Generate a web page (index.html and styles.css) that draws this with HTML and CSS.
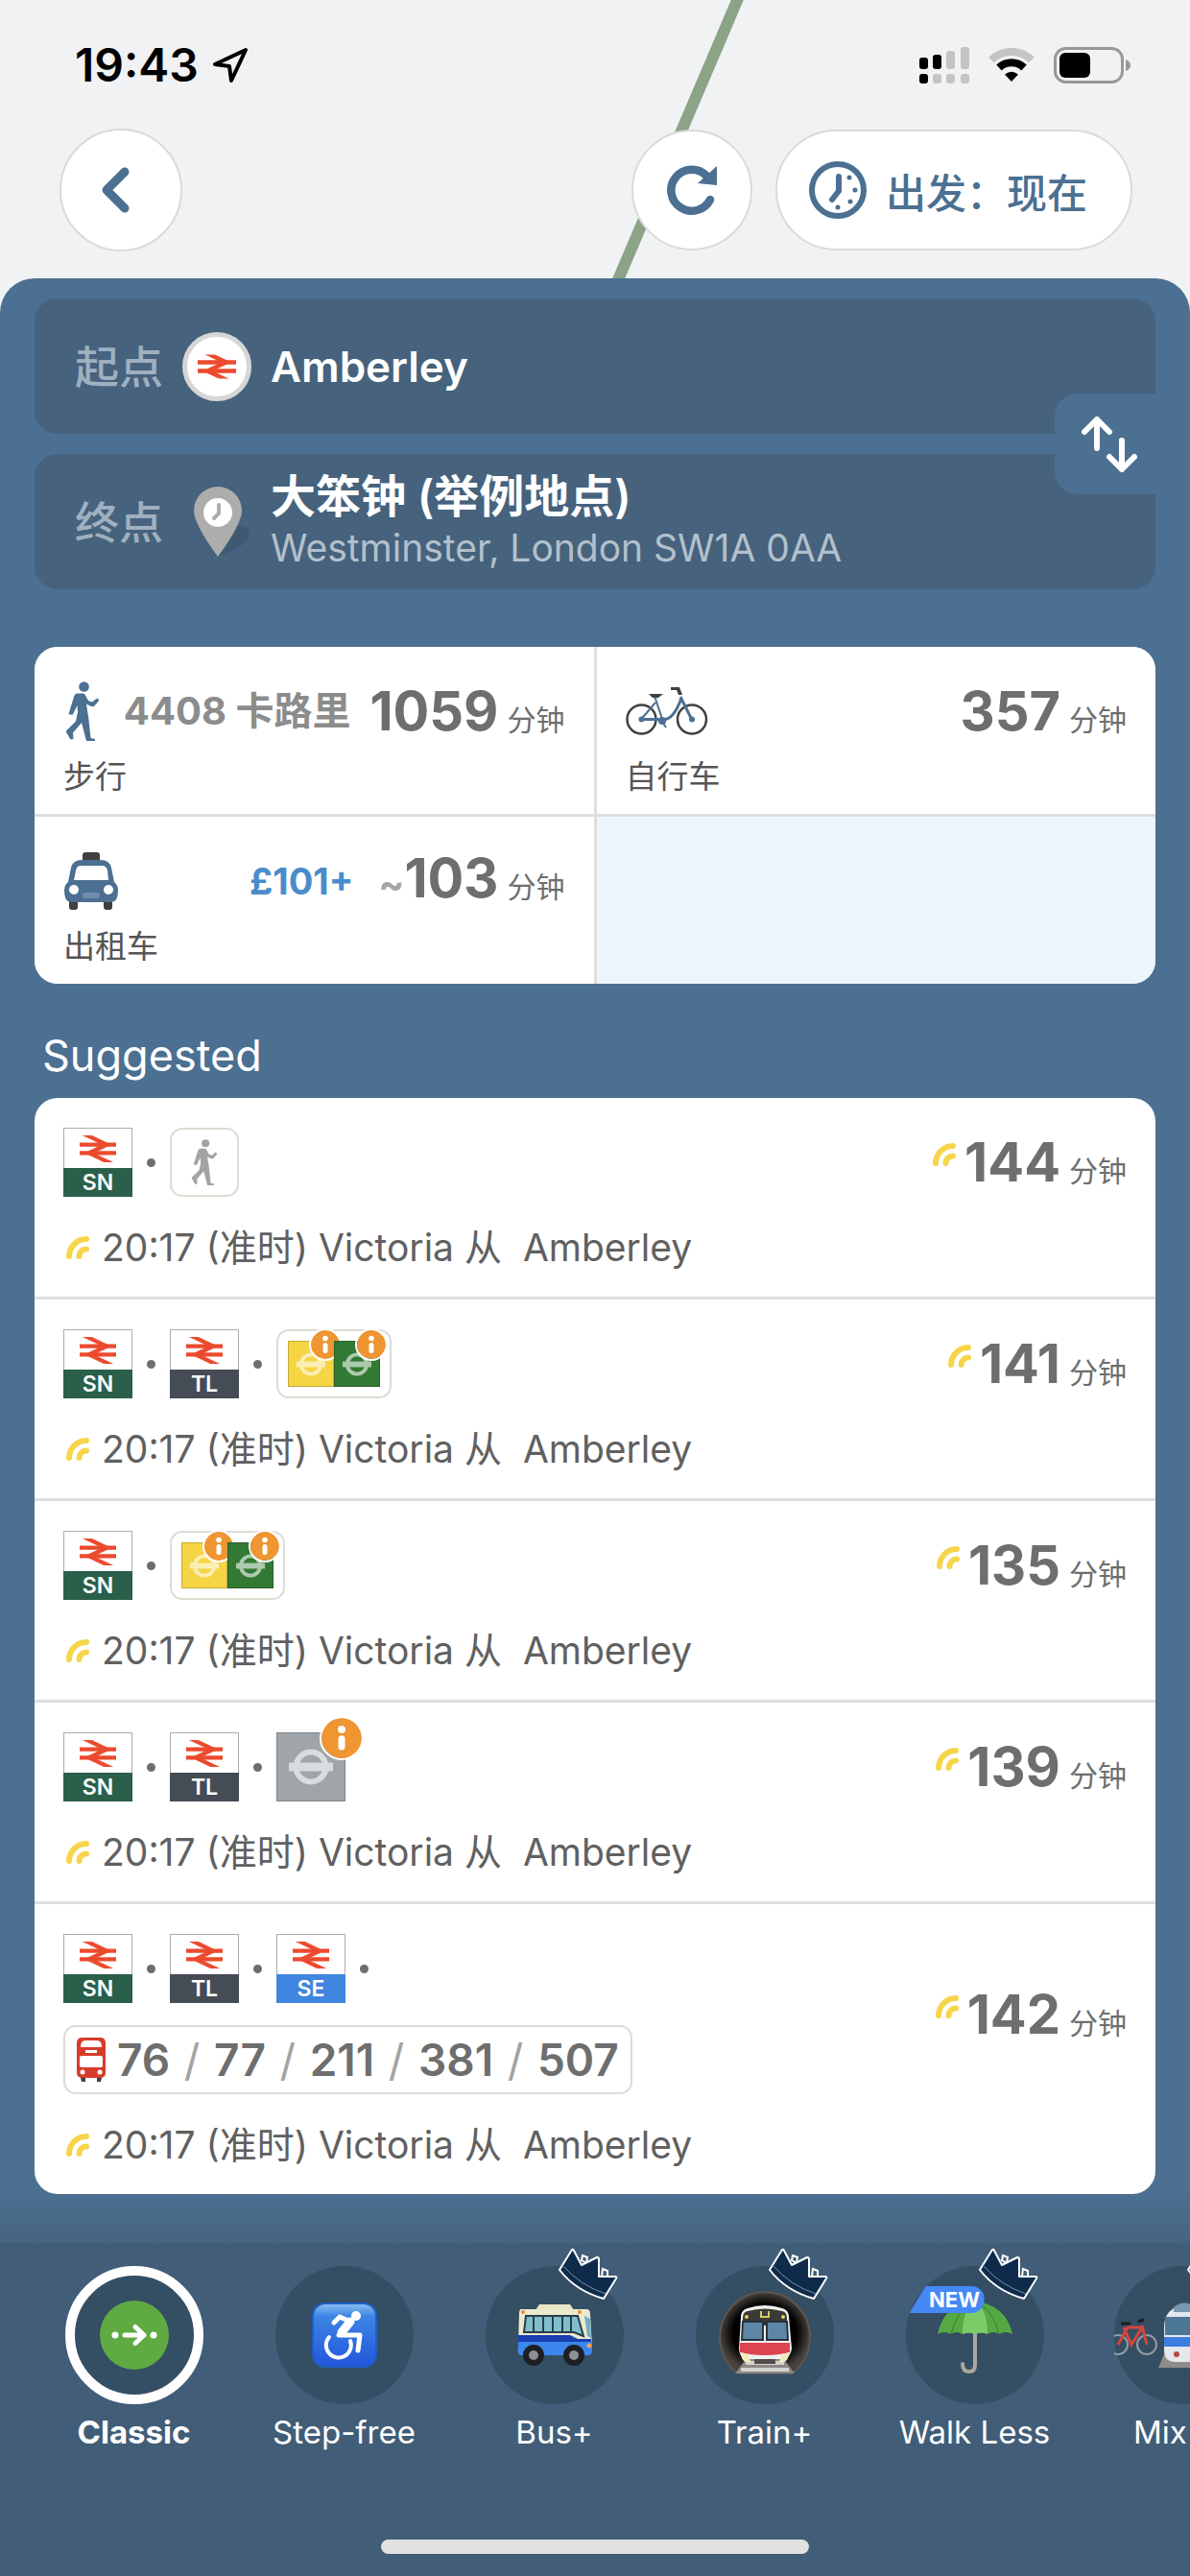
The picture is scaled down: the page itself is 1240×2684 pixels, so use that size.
FILE: index.html
```html
<!DOCTYPE html>
<html lang="zh-CN">
<head>
  <meta charset="UTF-8">
  <meta name="viewport" content="width=device-width, initial-scale=1.0">
  <title>Amberley - 大笨钟</title>
  <link rel="stylesheet" href="styles.css">
</head>
<body>

  <!-- Shared icons -->
  <svg class="sprite" aria-hidden="true">
    <symbol id="rail" viewBox="0 0 62 39">
      <g fill="none" stroke="#ec4a2e">
        <path d="M1-8.9 46 12.4 16 26.6 61 47.9" stroke-width="7"/>
        <path d="M0 12.4H62M62 26.6H0" stroke-width="7"/>
      </g>
    </symbol>
    <symbol id="walk" viewBox="0 0 35 62">
      <circle cx="19" cy="5.5" r="5.3"/>
      <path d="M12 12.500h6q2 0 3 3l2.500 4.500 4 1.500 5-4 2.500 2-5.500 6.500h-3l-5-2.500 2.500 16.500 2 19 4.500 1V62H21.500l-5-19-9 10.500.5 6.500-3 .5L0 52l10.500-10.500L12.500 32l-.5-7-5 10-4-1 5.500-18q1-3.500 3.500-3.500z"/>
    </symbol>
    <symbol id="live" viewBox="0 0 24 24">
      <g fill="none" stroke="#f7d54a" stroke-width="6" stroke-linecap="round">
        <path d="M3 21A18 18 0 0 1 21 3"/>
        <path d="M13.500 21A7.500 7.500 0 0 1 21 13.500"/>
      </g>
    </symbol>
    <symbol id="roundel" viewBox="0 0 46 38">
      <circle cx="23" cy="19" r="15.500" fill="none" stroke="#fff" stroke-width="6"/>
      <path d="M0 14.500h46v9H0z" fill="#fff"/>
    </symbol>
    <symbol id="info" viewBox="0 0 30 30">
      <circle cx="15" cy="15" r="15" fill="#ef9532"/>
      <circle cx="15" cy="8.500" r="2.800" fill="#fff"/>
      <rect x="12.500" y="13" width="5" height="11" rx="2.500" fill="#fff"/>
    </symbol>
    <symbol id="crown" viewBox="-2 -2 66 58">
      <path d="M25 7l5 2-1 6-5-3zM46 21l5 2v6h-6z" fill="#415d77" stroke="#fff" stroke-width="2"/>
      <path d="M1 22 14 1q1-1 2 1l8 15 16-8q2 0 2 2v18h17q2 0 1 2L47 52Q18 44 1 22z" fill="#0f2b4b" stroke="#fff" stroke-width="2" stroke-linejoin="round"/>
      <path d="M4 17Q22 38 49 47" fill="none" stroke="#7d90a5" stroke-width="1"/>
    </symbol>
  </svg>

  <!-- Map strip with status bar and controls -->
  <header class="header">
    <svg class="map" viewBox="0 0 1240 290" preserveAspectRatio="none" aria-hidden="true">
      <path d="M770-4 643 294" stroke="#8ba387" stroke-width="12"/>
    </svg>
    <div class="status">
      <span class="time">19:43</span>
      <svg class="location" viewBox="0 0 38 38"><path d="M35 3 3 18l15 2 2 15z" fill="none" stroke="#000" stroke-width="4" stroke-linejoin="round"/></svg>
      <svg class="cell" viewBox="0 0 52 38">
        <g fill="#000"><rect x="0" y="11" width="9" height="12" rx="3"/><rect x="14" y="8" width="9" height="15" rx="3"/><rect x="0" y="28" width="9" height="10" rx="3"/></g>
        <g fill="#c2c4c6"><rect x="28" y="4" width="9" height="19" rx="3"/><rect x="43" y="0" width="9" height="23" rx="3"/><rect x="14" y="28" width="9" height="10" rx="3"/><rect x="28" y="28" width="9" height="10" rx="3"/><rect x="43" y="28" width="9" height="10" rx="3"/></g>
      </svg>
      <svg class="wifi" viewBox="0 0 48 36">
        <g fill="none" stroke-width="8">
          <path d="M3 12.500a30 30 0 0 1 42 0" stroke="#c2c4c6"/>
          <path d="M11 20.500a19 19 0 0 1 26 0" stroke="#000"/>
        </g>
        <path d="M24 35l-7-7.500q7-5.500 14 0z"/>
      </svg>
      <svg class="battery" viewBox="0 0 80 38">
        <rect x="1.500" y="1.500" width="70" height="35" rx="11" fill="none" stroke="#96989a" stroke-width="3"/>
        <rect x="6" y="6" width="32" height="26" rx="6"/>
        <path d="M75 13q5 2 5 6t-5 6z" fill="#96989a"/>
      </svg>
    </div>
    <div class="controls">
      <button class="round-btn" aria-label="返回">
        <svg width="32" height="48" viewBox="0 0 32 48"><path d="M26 5 7 24l19 19" fill="none" stroke="#4b7091" stroke-width="9" stroke-linecap="round" stroke-linejoin="round"/></svg>
      </button>
      <button class="round-btn refresh" aria-label="刷新">
        <svg width="54" height="54" viewBox="0 0 54 54"><path d="M46 37A21.500 21.500 0 1 1 42 12" fill="none" stroke="#4b7091" stroke-width="8.500" stroke-linecap="round"/><path d="M53 2v20L33 20z" fill="#4b7091"/></svg>
      </button>
      <button class="depart">
        <svg width="60" height="60" viewBox="0 0 60 60">
          <g fill="none" stroke="#4b7091"><circle cx="30" cy="30" r="27" stroke-width="6"/><path d="M31 16v15l-7 9" stroke-width="6" stroke-linecap="round" stroke-linejoin="round"/></g>
          <g fill="#4b7091"><circle cx="42" cy="17" r="2.500"/><circle cx="48" cy="30" r="2.500"/><circle cx="43" cy="42" r="2.500"/><circle cx="30" cy="48" r="2.500"/></g>
        </svg>
        出发：现在
      </button>
    </div>
  </header>

  <main class="sheet">

    <!-- Start and end -->
    <section class="search">
      <button class="place">
        <span class="place-label">起点</span>
        <span class="station"><svg width="40" height="30" viewBox="0 0 62 39"><use href="#rail"/></svg></span>
        <span class="place-name">Amberley</span>
      </button>
      <button class="place">
        <span class="place-label">终点</span>
        <svg class="pin" viewBox="0 0 72 76">
          <path d="M37 73Q40 46 56 42q12-2 14 8-2 14-33 23z" fill="#3e5972"/>
          <path d="M37 74Q12 40 12 26a25 25 0 0 1 50 0Q62 40 37 74z" fill="#adadad"/>
          <circle cx="37" cy="28" r="15" fill="#fff"/>
          <path d="M38 20v9l-5 5" fill="none" stroke="#adadad" stroke-width="4" stroke-linecap="round"/>
        </svg>
        <span class="place-text">
          <span class="place-name zh">大笨钟 (举例地点)</span>
          <span class="address">Westminster, London SW1A 0AA</span>
        </span>
      </button>
      <button class="swap" aria-label="交换">
        <svg width="60" height="60" viewBox="0 0 60 60"><path d="M17 34V4M4 17 17 4l13 13M43 26v30M30 43l13 13 13-13" fill="none" stroke="#fff" stroke-width="6" stroke-linecap="round" stroke-linejoin="round"/></svg>
      </button>
    </section>

    <!-- Walk / bike / taxi -->
    <section class="options">
      <div class="option">
        <div class="option-head">
          <svg class="walk-blue" viewBox="0 0 35 62"><use href="#walk"/></svg>
          <span class="calories">4408 卡路里</span>
          <span class="duration"><b>1059</b>分钟</span>
        </div>
        <p>步行</p>
      </div>
      <div class="option">
        <div class="option-head">
          <svg width="86" height="50" viewBox="0 0 86 50">
            <g fill="none" stroke="#404040" stroke-width="2.500"><circle cx="16.500" cy="33.500" r="15"/><circle cx="69" cy="33.500" r="15"/></g>
            <g fill="none" stroke="#4b7091"><path d="M16 33.500 31 16M30 9l9 27" stroke-width="2"/><path d="M16 33.500h24q10 0 18-22" stroke-width="3"/><path d="M57 10l12 24" stroke-width="3"/><path d="M38 36l4 6" stroke-width="2"/></g>
            <g fill="#4b7091"><circle cx="16.500" cy="33.500" r="3"/><circle cx="69" cy="33.500" r="3"/><circle cx="38" cy="35" r="4"/></g>
            <path d="M24 7h15l-5 4h-6zM47 0h9l3 8h-4l-2-5h-6z" fill="#404040"/>
          </svg>
          <span class="duration"><b>357</b>分钟</span>
        </div>
        <p>自行车</p>
      </div>
      <div class="option">
        <div class="option-head">
          <svg width="58" height="60" viewBox="0 0 56 60">
            <g fill="#404040"><rect x="19" y="0" width="18" height="12" rx="3"/><rect x="5" y="46" width="9" height="14" rx="3"/><rect x="41" y="46" width="9" height="14" rx="3"/></g>
            <path d="M18 8h20q9 0 11 8l3 15q4 3 4 9 0 12-7 12H7q-7 0-7-12 0-6 4-9l3-15q2-8 11-8z" fill="#4b7091"/>
            <path d="M17 14h22q5 0 6 5l1 10H10l2-10q1-5 5-5z" fill="#fff"/>
            <circle cx="10" cy="39" r="5" fill="#fff"/><circle cx="46" cy="39" r="5" fill="#fff"/>
            <rect x="19" y="42" width="18" height="6" rx="3" fill="#6f8dab"/>
          </svg>
          <span class="price">£101+</span>
          <span class="duration"><b><i>~</i>103</b>分钟</span>
        </div>
        <p>出租车</p>
      </div>
      <div class="option empty"></div>
    </section>

    <h2>Suggested</h2>

    <!-- Routes -->
    <ul class="routes">
      <li class="route">
        <div class="route-head">
          <div class="legs">
            <span class="leg sn"><svg><use href="#rail"/></svg><b>SN</b></span>
            <span class="dot"></span>
            <span class="leg-box"><svg class="walk-grey" viewBox="0 0 35 62"><use href="#walk"/></svg></span>
          </div>
          <span class="duration"><svg><use href="#live"/></svg><b>144</b>分钟</span>
        </div>
        <p><svg><use href="#live"/></svg><span>20:17 (准时) Victoria 从  Amberley</span></p>
      </li>
      <li class="route">
        <div class="route-head">
          <div class="legs">
            <span class="leg sn"><svg><use href="#rail"/></svg><b>SN</b></span>
            <span class="dot"></span>
            <span class="leg tl"><svg><use href="#rail"/></svg><b>TL</b></span>
            <span class="dot"></span>
            <span class="leg-box">
              <span class="line circle-line"><svg><use href="#roundel"/></svg><svg class="info"><use href="#info"/></svg></span>
              <span class="line district-line"><svg><use href="#roundel"/></svg><svg class="info"><use href="#info"/></svg></span>
            </span>
          </div>
          <span class="duration"><svg><use href="#live"/></svg><b>141</b>分钟</span>
        </div>
        <p><svg><use href="#live"/></svg><span>20:17 (准时) Victoria 从  Amberley</span></p>
      </li>
      <li class="route">
        <div class="route-head">
          <div class="legs">
            <span class="leg sn"><svg><use href="#rail"/></svg><b>SN</b></span>
            <span class="dot"></span>
            <span class="leg-box">
              <span class="line circle-line"><svg><use href="#roundel"/></svg><svg class="info"><use href="#info"/></svg></span>
              <span class="line district-line"><svg><use href="#roundel"/></svg><svg class="info"><use href="#info"/></svg></span>
            </span>
          </div>
          <span class="duration"><svg><use href="#live"/></svg><b>135</b>分钟</span>
        </div>
        <p><svg><use href="#live"/></svg><span>20:17 (准时) Victoria 从  Amberley</span></p>
      </li>
      <li class="route">
        <div class="route-head">
          <div class="legs">
            <span class="leg sn"><svg><use href="#rail"/></svg><b>SN</b></span>
            <span class="dot"></span>
            <span class="leg tl"><svg><use href="#rail"/></svg><b>TL</b></span>
            <span class="dot"></span>
            <span class="line jubilee-line"><svg><use href="#roundel"/></svg><svg class="info"><use href="#info"/></svg></span>
          </div>
          <span class="duration"><svg><use href="#live"/></svg><b>139</b>分钟</span>
        </div>
        <p><svg><use href="#live"/></svg><span>20:17 (准时) Victoria 从  Amberley</span></p>
      </li>
      <li class="route">
        <div class="route-head">
          <div class="legs">
            <span class="leg sn"><svg><use href="#rail"/></svg><b>SN</b></span>
            <span class="dot"></span>
            <span class="leg tl"><svg><use href="#rail"/></svg><b>TL</b></span>
            <span class="dot"></span>
            <span class="leg se"><svg><use href="#rail"/></svg><b>SE</b></span>
            <span class="dot"></span>
            <span class="leg-box buses">
              <svg width="30" height="46" viewBox="0 0 30 46">
                <path d="M3 38h6v8H5zM21 38h6l-2 8h-4z" fill="#404040"/>
                <rect width="30" height="42" rx="5" fill="#d63c2a"/>
                <path d="M4 10q0-7 5-7h12q5 0 5 7z" fill="#fff"/>
                <rect x="9" y="13" width="12" height="3" fill="#fff"/>
                <rect x="3" y="19" width="24" height="12" rx="2" fill="#fff"/>
                <circle cx="6" cy="36" r="2.500" fill="#fff"/><circle cx="24" cy="36" r="2.500" fill="#fff"/>
              </svg>
              <span>76 <i>/</i> 77 <i>/</i> 211 <i>/</i> 381 <i>/</i> 507</span>
            </span>
          </div>
          <span class="duration"><svg><use href="#live"/></svg><b>142</b>分钟</span>
        </div>
        <p><svg><use href="#live"/></svg><span>20:17 (准时) Victoria 从  Amberley</span></p>
      </li>
    </ul>
  </main>

  <!-- Route modes -->
  <nav class="modes">
    <div class="mode-list">
      <button class="mode active">
        <span class="mode-icon">
          <svg width="72" height="72" viewBox="0 0 72 72"><circle cx="36" cy="36" r="36" fill="#5faa43"/><circle cx="16" cy="36" r="3.500" fill="#fff"/><circle cx="56" cy="36" r="3.500" fill="#fff"/><path d="M26 36h20M37 27.500l9 8.500-9 8.500" fill="none" stroke="#fff" stroke-width="5" stroke-linecap="round" stroke-linejoin="round"/></svg>
        </span>
        <span>Classic</span>
      </button>
      <button class="mode">
        <span class="mode-icon">
          <svg width="68" height="68" viewBox="0 0 68 68">
            <defs><linearGradient id="sf" x2="0" y2="1"><stop offset="0" stop-color="#8dc0f2"/><stop offset=".2" stop-color="#3d85e4"/><stop offset="1" stop-color="#2355dc"/></linearGradient></defs>
            <rect x="1" y="1" width="66" height="66" rx="13" fill="url(#sf)" stroke="#1e5fc4" stroke-width="2"/>
            <circle cx="46" cy="14" r="5" fill="#fff"/>
            <g fill="none" stroke="#fff" stroke-linecap="round" stroke-linejoin="round"><path d="M23 21l6-6 9 4" stroke-width="5"/><path d="M28 34h22l-2 16" stroke-width="5"/><path d="M18 36a13 13 0 1 0 22 4" stroke-width="4"/><path d="M40 20 31 31" stroke-width="9"/></g>
          </svg>
        </span>
        <span>Step-free</span>
      </button>
      <button class="mode">
        <span class="mode-icon">
          <svg width="78" height="64" viewBox="0 0 78 64">
            <path d="M23 0h32l4 6H19z" fill="#e9e6c8"/>
            <path d="M3 5h69q4 0 4 5l2 34q0 8-4 8H4q-4 0-3-8l1-36z" fill="#ece9cf"/>
            <path d="M1 32h54l8 4h14v9H1z" fill="#1b3fae"/><path d="M1 39h77v9q0 5-4 5H4q-3 0-3-5z" fill="#3c86f0"/>
            <path d="M9 12h54l6 21-10-4H7z" fill="#7fbfcd" stroke="#2b3c48" stroke-width="2"/>
            <path d="M17 12v17M27 12v17M37 12v17M47 12v17M56 12v17" stroke="#2b3c48" stroke-width="2"/>
            <path d="M70 12l6 3 1 20-4-2z" fill="#6fb0c4"/>
            <circle cx="6" cy="8" r="2" fill="#f08a35"/><circle cx="65" cy="8" r="2" fill="#f08a35"/><circle cx="75" cy="43" r="2.500" fill="#f5a35a"/>
            <g fill="#1d1f22"><circle cx="17" cy="53" r="11"/><circle cx="59" cy="53" r="11"/></g>
            <g fill="#8d8f92"><circle cx="17" cy="53" r="5"/><circle cx="59" cy="53" r="5"/></g>
          </svg>
          <svg class="crown"><use href="#crown"/></svg>
        </span>
        <span>Bus+</span>
      </button>
      <button class="mode">
        <span class="mode-icon">
          <svg width="96" height="96" viewBox="0 0 96 96">
            <defs><radialGradient id="tunnel"><stop offset=".7" stop-color="#000"/><stop offset="1" stop-color="#47423e"/></radialGradient></defs>
            <path d="M20 88A47 47 0 1 1 76 88z" fill="url(#tunnel)" stroke="#5b5752" stroke-width="2"/>
            <path d="M29 72h38l12 16H17z" fill="#8b8986"/><path d="M28 77h40M23 84h50" stroke="#d5d3d0" stroke-width="4"/>
            <path d="M30 20q18-6 36 0 7 2 7 9l3 33q-1 10-10 11H30q-9-1-9-11l2-33q0-7 7-9z" fill="#f1f1f0"/>
            <path d="M30 23q18-5 36 0 5 1 5 7v8H25v-8q0-6 5-7z" fill="#3a3a36"/>
            <path d="M25 34h21v19H24zM50 34h21l1 19H50z" fill="#5d87a5" stroke="#26333e" stroke-width="2"/>
            <path d="M44 23v6h8v-6" fill="none" stroke="#d4cb64" stroke-width="2"/>
            <path d="M22 56h52v10q-12 3-26 3t-26-3z" fill="#dd4450"/>
            <path d="M23 66l8 2 2 8h-5q-5-2-5-10zM73 66l-8 2-2 8h5q5-2 5-10z" fill="#f1eebd"/><rect x="37" y="73" width="22" height="5" fill="#504c48"/>
            <g fill="#e5cf61"><circle cx="29" cy="29" r="2"/><circle cx="67" cy="29" r="2"/></g>
          </svg>
          <svg class="crown"><use href="#crown"/></svg>
        </span>
        <span>Train+</span>
      </button>
      <button class="mode">
        <span class="mode-icon">
          <svg width="78" height="82" viewBox="0 0 78 82">
            <path d="M39 38v34q0 7-6 7-7 0-7-8" fill="none" stroke="#aaa79c" stroke-width="4" stroke-linecap="round"/>
            <path d="M0 40Q6 9 39 6q32 3 39 34-7-4-14 0-6-4-12 0-6-3-13 0-7-3-13 0-6-4-12 0-7-4-14 0z" fill="#55a943"/>
            <path d="M26 40Q26 14 39 6q13 8 13 34-6-3-13 0-7-3-13 0z" fill="#7dcb68"/>
            <path d="M14 40Q20 14 39 6M64 40Q58 14 39 6" fill="none" stroke="#377d2c" stroke-width="1"/>
          </svg>
          <svg class="crown"><use href="#crown"/></svg>
          <em class="new">NEW</em>
        </span>
        <span>Walk Less</span>
      </button>
      <button class="mode partial">
        <span class="mode-icon">
          <svg width="144" height="72" viewBox="0 0 144 72">
            <g fill="none" stroke="#929ba3" stroke-width="2"><circle cx="4" cy="46" r="10"/><circle cx="34" cy="46" r="10"/></g>
            <path d="M4 46 14 28h15L18 46l-8-18M29 26l5 20" fill="none" stroke="#d3463c" stroke-width="3"/>
            <path d="M7 24h10M25 22l6-2" stroke="#191d21" stroke-width="3"/>
            <path d="M52 56h42l6 14H46z" fill="#8e8d8b"/>
            <path d="M62 8q11-10 22 0 12 6 12 20v24q-3 12-16 12H64q-12 0-12-12V28q0-14 10-20z" fill="#e4e8ee"/>
            <path d="M62 7q11-9 22 0l-2 5H62z" fill="#7898af"/><path d="M53 17h42v19H53z" fill="#4d7796"/><path d="M52 38h44v10H52z" fill="#3b7de0"/>
            <circle cx="65" cy="56" r="3" fill="#ba4640"/><circle cx="83" cy="56" r="3" fill="#ba4640"/>
          </svg>
          <svg class="crown"><use href="#crown"/></svg>
        </span>
        <span class="mode-name">Mix</span>
      </button>
    </div>
    <div class="home-bar"></div>
  </nav>

</body>
</html>
```

FILE: styles.css
```css
/* General Reset */
* {
  margin: 0;
  padding: 0;
  box-sizing: border-box;
}

body {
  display: flex;
  flex-direction: column;
  min-height: 100vh;
  font-family: Inter, 'Noto Sans CJK SC', sans-serif;
  background-color: #f0f2f4;
  color: #666;
}

button {
  border: none;
  background: none;
  font-family: inherit;
  cursor: pointer;
}

svg {
  display: block;
  flex: none;
}

i, em {
  font-style: normal;
}

.sprite {
  position: absolute;
  width: 0;
  height: 0;
}

/* Header */
.header {
  position: relative;
  padding: 44px 60px 28px 62px;
}

.map {
  position: absolute;
  top: 0;
  left: 0;
  width: 100%;
  height: 100%;
}

.status {
  position: relative;
  display: flex;
  align-items: center;
  height: 48px;
  padding: 0 2px 0 16px;
}

.time {
  font-size: 48px;
  line-height: 48px;
  font-weight: 600;
  color: #000;
}

.location {
  width: 38px;
  height: 38px;
  margin-left: 14px;
}

.cell {
  width: 52px;
  height: 38px;
  margin-left: auto;
}

.wifi {
  width: 48px;
  height: 36px;
  margin: 0 20px;
}

.battery {
  width: 80px;
  height: 38px;
}

.controls {
  position: relative;
  display: flex;
  align-items: center;
  gap: 24px;
  margin-top: 42px;
}

.round-btn,
.depart {
  display: flex;
  align-items: center;
  justify-content: center;
  height: 128px;
  background-color: #fff;
  border: 2px solid #d9dadb;
  border-radius: 64px;
}

.round-btn {
  width: 128px;
}

.round-btn:first-child svg {
  margin-right: 12px;
}

.round-btn.refresh {
  width: 126px;
  height: 126px;
  margin-left: auto;
}

.depart {
  gap: 20px;
  width: 372px;
  height: 126px;
  padding-right: 12px;
  font-size: 42px;
  font-weight: 500;
  color: #4b7091;
}

/* Sheet */
.sheet {
  position: relative;
  flex: 1;
  padding: 21px 36px 51px;
  background: linear-gradient(to top, #46647f, #4b7091 50px);
  border-radius: 36px 36px 0 0;
}

.search {
  position: relative;
  display: flex;
  flex-direction: column;
  gap: 21px;
  margin-bottom: 60px;
}

.place {
  display: flex;
  align-items: center;
  gap: 20px;
  height: 141px;
  padding: 0 42px;
  background-color: #46627d;
  border-radius: 24px;
  text-align: left;
}

.place-label {
  font-size: 46px;
  line-height: 54px;
  font-weight: 500;
  color: #9fb0c0;
}

.station {
  display: flex;
  align-items: center;
  justify-content: center;
  width: 72px;
  height: 72px;
  background-color: #fff;
  border: 5px solid #d6d6d6;
  border-radius: 50%;
}

.pin {
  width: 72px;
  height: 76px;
}

.place-text {
  display: flex;
  flex-direction: column;
}

.place-name {
  font-size: 44px;
  line-height: 54px;
  font-weight: 600;
  color: #fff;
}

.place-name.zh {
  font-size: 47px;
}

.address {
  font-size: 39px;
  line-height: 54px;
  color: #b3c0cc;
}

.swap {
  position: absolute;
  top: 99px;
  right: 0;
  display: flex;
  align-items: center;
  justify-content: center;
  width: 105px;
  height: 105px;
  padding-left: 8px;
  background-color: #4b7091;
  border-radius: 24px 0 0 24px;
}

/* Walk, bike and taxi grid */
.options {
  display: grid;
  grid-template-columns: 1fr 1fr;
  gap: 3px;
  background-color: #dedede;
  border-radius: 24px;
  overflow: hidden;
}

.option {
  height: 174px;
  padding: 31px 30px 15px;
  background-color: #fff;
}

.option.empty {
  background-color: #edf5fc;
}

.option-head {
  display: flex;
  align-items: center;
  gap: 20px;
  height: 72px;
  margin-bottom: 8px;
}

.option p {
  font-size: 33px;
  line-height: 48px;
  color: #555;
}

.walk-blue {
  width: 40px;
  height: 62px;
  fill: #4b7091;
}

.calories,
.price {
  margin-left: auto;
  font-size: 40px;
  line-height: 56px;
  font-weight: 700;
  white-space: nowrap;
  color: #8c8c8c;
}

.price {
  font-size: 38px;
  color: #4a8cca;
}

.duration {
  display: flex;
  align-items: baseline;
  justify-content: flex-end;
  gap: 9px;
  min-width: 200px;
  margin-left: auto;
  font-size: 30px;
  line-height: 36px;
  white-space: nowrap;
  color: #6e6e6e;
}

.price + .duration,
.calories + .duration {
  margin-left: 0;
}

.duration b {
  font-size: 56px;
  line-height: 56px;
  font-weight: 700;
}

.duration i {
  font-size: 40px;
  color: #a6a6a6;
}

.duration svg {
  align-self: flex-start;
  width: 24px;
  height: 24px;
  margin-top: 8px;
}

/* Routes */
h2 {
  margin: 48px 8px 17px;
  font-size: 45px;
  line-height: 54px;
  font-weight: 400;
  color: #fff;
}

.routes {
  background-color: #fff;
  border-radius: 24px;
  list-style: none;
}

.route {
  padding: 31px 30px 27px;
}

.route + .route {
  border-top: 3px solid #dedede;
}

.route-head {
  display: flex;
  align-items: center;
  justify-content: space-between;
  margin-bottom: 29px;
}

.route p {
  display: flex;
  align-items: center;
  gap: 13px;
  padding-left: 3px;
  font-size: 39px;
  line-height: 48px;
  color: #606060;
  white-space: pre;
}

.route p svg {
  width: 24px;
  height: 24px;
}

.legs {
  display: flex;
  flex-wrap: wrap;
  align-items: center;
  gap: 23px 15px;
  max-width: 640px;
}

.leg {
  display: flex;
  flex-direction: column;
  align-items: center;
  justify-content: space-between;
  width: 72px;
  height: 72px;
  padding-top: 7px;
  border: 1px solid #adadad;
}

.leg svg {
  width: 38px;
  height: 28px;
}

.leg b {
  align-self: stretch;
  margin: 0 -1px -1px;
  font-size: 23px;
  line-height: 30px;
  font-weight: 600;
  text-align: center;
  color: #fff;
}

.sn b {
  background-color: #2a5f4a;
}

.tl b {
  background-color: #464c55;
}

.se b {
  background-color: #4085e0;
}

.dot {
  width: 9px;
  height: 9px;
  background-color: #6e6e6e;
  border-radius: 50%;
}

.leg-box {
  display: flex;
  align-items: center;
  justify-content: center;
  min-width: 72px;
  height: 72px;
  padding: 0 10px;
  border: 2px solid #dcdcd3;
  border-radius: 13px;
}

.walk-grey {
  width: 28px;
  height: 48px;
  fill: #a3a3a3;
}

.line {
  position: relative;
  display: flex;
  align-items: center;
  justify-content: center;
  width: 48px;
  height: 48px;
  border: 1px solid rgba(0, 0, 0, 0.2);
}

.line svg {
  width: 30px;
  height: 25px;
  opacity: 0.6;
}

.line .info {
  position: absolute;
  top: -14px;
  right: -9px;
  width: 34px;
  height: 34px;
  border: 2px solid #fff;
  border-radius: 50%;
  opacity: 1;
}

.circle-line {
  background-color: #f6d545;
}

.district-line {
  background-color: #327a33;
}

.jubilee-line {
  width: 72px;
  height: 72px;
  background-color: #a0a5a9;
}

.jubilee-line svg {
  width: 46px;
  height: 38px;
}

.jubilee-line .info {
  top: -18px;
  right: -20px;
  width: 46px;
  height: 46px;
}

.buses {
  gap: 12px;
  padding: 0 12px;
  font-size: 46px;
  line-height: 56px;
  font-weight: 600;
  white-space: nowrap;
  color: #6e6e6e;
}

.buses i {
  margin: 0 3px;
  font-weight: 400;
  color: #a3a3a3;
}

/* Bottom bar */
.modes {
  display: flex;
  flex-direction: column;
  align-items: center;
  height: 348px;
  padding: 24px 0;
  background-color: #415d77;
  overflow: hidden;
}

.mode-list {
  display: flex;
  align-self: stretch;
  padding-left: 30px;
}

.mode {
  display: flex;
  flex-direction: column;
  flex: none;
  align-items: center;
  gap: 9px;
  width: 219px;
  font-size: 33px;
  line-height: 40px;
  color: #fff;
}

.mode.active {
  font-weight: 700;
}

.mode.partial {
  flex: 1;
  width: auto;
  min-width: 0;
  padding-left: 36px;
  align-items: flex-start;
}

.partial .mode-name {
  padding-left: 20px;
}

.mode-icon {
  position: relative;
  display: flex;
  flex: none;
  align-items: center;
  justify-content: center;
  width: 144px;
  height: 144px;
  background-color: #344e64;
  border-radius: 50%;
}

.active .mode-icon {
  border: 10px solid #fff;
}

.crown {
  position: absolute;
  top: -20px;
  left: 74px;
  width: 66px;
  height: 58px;
}

.new {
  position: absolute;
  top: 21px;
  left: 4px;
  width: 78px;
  padding-left: 16px;
  font-size: 22px;
  line-height: 28px;
  font-weight: 700;
  text-align: center;
  background-color: #4489f5;
  border-radius: 0 14px 14px 0;
  clip-path: polygon(22% 0, 100% 0, 100% 100%, 0 100%);
}

.home-bar {
  width: 36%;
  height: 15px;
  margin-top: auto;
  background-color: #e1e1e1;
  border-radius: 8px;
}
```
